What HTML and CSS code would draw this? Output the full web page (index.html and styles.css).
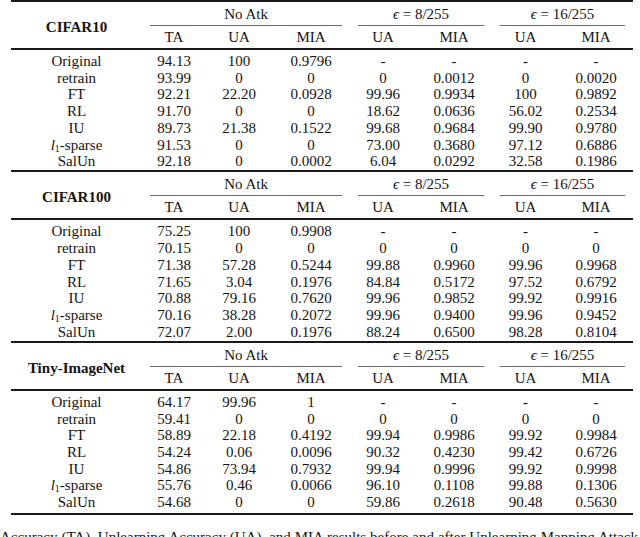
FILE: index.html
```html
<!DOCTYPE html>
<html lang="en">
<head>
<meta charset="utf-8">
<title>Unlearning results</title>
<link rel="stylesheet" href="styles.css">
</head>
<body>
<div class="page">
  <table class="res">
    <colgroup><col class="c-lab"><col class="c-ta"><col class="c-ua"><col class="c-mia"><col class="c-ua8"><col class="c-mia8"><col class="c-ua16"><col class="c-mia16"></colgroup>
    <thead>
      <tr class="h1"><th rowspan="2" class="ds">CIFAR10</th><th colspan="3" class="grp">No Atk</th><th colspan="2" class="grp"><i>ϵ</i> = 8/255</th><th colspan="2" class="grp"><i>ϵ</i> = 16/255</th></tr>
      <tr class="h2"><th>TA</th><th>UA</th><th>MIA</th><th>UA</th><th>MIA</th><th>UA</th><th>MIA</th></tr>
    </thead>
    <tbody>
      <tr><td>Original</td><td>94.13</td><td>100</td><td>0.9796</td><td>-</td><td>-</td><td>-</td><td>-</td></tr>
      <tr><td>retrain</td><td>93.99</td><td>0</td><td>0</td><td>0</td><td>0.0012</td><td>0</td><td>0.0020</td></tr>
      <tr><td>FT</td><td>92.21</td><td>22.20</td><td>0.0928</td><td>99.96</td><td>0.9934</td><td>100</td><td>0.9892</td></tr>
      <tr><td>RL</td><td>91.70</td><td>0</td><td>0</td><td>18.62</td><td>0.0636</td><td>56.02</td><td>0.2534</td></tr>
      <tr><td>IU</td><td>89.73</td><td>21.38</td><td>0.1522</td><td>99.68</td><td>0.9684</td><td>99.90</td><td>0.9780</td></tr>
      <tr><td><i>l</i><sub>1</sub>-sparse</td><td>91.53</td><td>0</td><td>0</td><td>73.00</td><td>0.3680</td><td>97.12</td><td>0.6886</td></tr>
      <tr><td>SalUn</td><td>92.18</td><td>0</td><td>0.0002</td><td>6.04</td><td>0.0292</td><td>32.58</td><td>0.1986</td></tr>
    </tbody>
  </table>
  <table class="res">
    <colgroup><col class="c-lab"><col class="c-ta"><col class="c-ua"><col class="c-mia"><col class="c-ua8"><col class="c-mia8"><col class="c-ua16"><col class="c-mia16"></colgroup>
    <thead>
      <tr class="h1"><th rowspan="2" class="ds">CIFAR100</th><th colspan="3" class="grp">No Atk</th><th colspan="2" class="grp"><i>ϵ</i> = 8/255</th><th colspan="2" class="grp"><i>ϵ</i> = 16/255</th></tr>
      <tr class="h2"><th>TA</th><th>UA</th><th>MIA</th><th>UA</th><th>MIA</th><th>UA</th><th>MIA</th></tr>
    </thead>
    <tbody>
      <tr><td>Original</td><td>75.25</td><td>100</td><td>0.9908</td><td>-</td><td>-</td><td>-</td><td>-</td></tr>
      <tr><td>retrain</td><td>70.15</td><td>0</td><td>0</td><td>0</td><td>0</td><td>0</td><td>0</td></tr>
      <tr><td>FT</td><td>71.38</td><td>57.28</td><td>0.5244</td><td>99.88</td><td>0.9960</td><td>99.96</td><td>0.9968</td></tr>
      <tr><td>RL</td><td>71.65</td><td>3.04</td><td>0.1976</td><td>84.84</td><td>0.5172</td><td>97.52</td><td>0.6792</td></tr>
      <tr><td>IU</td><td>70.88</td><td>79.16</td><td>0.7620</td><td>99.96</td><td>0.9852</td><td>99.92</td><td>0.9916</td></tr>
      <tr><td><i>l</i><sub>1</sub>-sparse</td><td>70.16</td><td>38.28</td><td>0.2072</td><td>99.96</td><td>0.9400</td><td>99.96</td><td>0.9452</td></tr>
      <tr><td>SalUn</td><td>72.07</td><td>2.00</td><td>0.1976</td><td>88.24</td><td>0.6500</td><td>98.28</td><td>0.8104</td></tr>
    </tbody>
  </table>
  <table class="res last">
    <colgroup><col class="c-lab"><col class="c-ta"><col class="c-ua"><col class="c-mia"><col class="c-ua8"><col class="c-mia8"><col class="c-ua16"><col class="c-mia16"></colgroup>
    <thead>
      <tr class="h1"><th rowspan="2" class="ds">Tiny-ImageNet</th><th colspan="3" class="grp">No Atk</th><th colspan="2" class="grp"><i>ϵ</i> = 8/255</th><th colspan="2" class="grp"><i>ϵ</i> = 16/255</th></tr>
      <tr class="h2"><th>TA</th><th>UA</th><th>MIA</th><th>UA</th><th>MIA</th><th>UA</th><th>MIA</th></tr>
    </thead>
    <tbody>
      <tr><td>Original</td><td>64.17</td><td>99.96</td><td>1</td><td>-</td><td>-</td><td>-</td><td>-</td></tr>
      <tr><td>retrain</td><td>59.41</td><td>0</td><td>0</td><td>0</td><td>0</td><td>0</td><td>0</td></tr>
      <tr><td>FT</td><td>58.89</td><td>22.18</td><td>0.4192</td><td>99.94</td><td>0.9986</td><td>99.92</td><td>0.9984</td></tr>
      <tr><td>RL</td><td>54.24</td><td>0.06</td><td>0.0096</td><td>90.32</td><td>0.4230</td><td>99.42</td><td>0.6726</td></tr>
      <tr><td>IU</td><td>54.86</td><td>73.94</td><td>0.7932</td><td>99.94</td><td>0.9996</td><td>99.92</td><td>0.9998</td></tr>
      <tr><td><i>l</i><sub>1</sub>-sparse</td><td>55.76</td><td>0.46</td><td>0.0066</td><td>96.10</td><td>0.1108</td><td>99.88</td><td>0.1306</td></tr>
      <tr><td>SalUn</td><td>54.68</td><td>0</td><td>0</td><td>59.86</td><td>0.2618</td><td>90.48</td><td>0.5630</td></tr>
    </tbody>
  </table>
  <p class="caption">Accuracy (TA), Unlearning Accuracy (UA), and MIA results before and after Unlearning Mapping Attack</p>
</div>
</body>
</html>
```
FILE: styles.css
```css
html, body {
  margin: 0;
  padding: 0;
  background: #ffffff;
}

.page {
  width: 622px;
  margin-left: 11px;
  font-family: "Liberation Serif", "Times New Roman", serif;
  color: #141414;
}

.res {
  width: 622px;
  table-layout: fixed;
  border-collapse: separate;
  border-spacing: 0;
  border-top: 2px solid #1a1a1a;
  font-size: 15px;
}

.res.last {
  border-bottom: 2px solid #1a1a1a;
}

.c-lab { width: 131px; }
.c-ta { width: 64px; }
.c-ua { width: 66px; }
.c-mia { width: 78px; }
.c-ua8 { width: 66px; }
.c-mia8 { width: 76px; }
.c-ua16 { width: 67px; }
.c-mia16 { width: 74px; }

.res th,
.res td {
  padding: 0;
  text-align: center;
  font-weight: normal;
  white-space: nowrap;
}

.h1 th {
  height: 24px;
  line-height: 24px;
}

.h1 .ds {
  font-weight: bold;
  border-bottom: 2px solid #1a1a1a;
  line-height: 18px;
  padding-top: 4px;
}

.grp {
  position: relative;
}

.grp::after {
  content: "";
  position: absolute;
  left: 8px;
  right: 8px;
  bottom: 0;
  height: 1px;
  background: #6a6a6a;
}

.h2 th {
  height: 22px;
  line-height: 22px;
  border-bottom: 2px solid #1a1a1a;
}

.res td {
  height: 16.7px;
  line-height: 16.7px;
}

.res tbody tr:first-child td {
  padding-top: 3px;
}

.res tbody tr:last-child td {
  padding-bottom: 0.5px;
}

.res.last tbody tr:last-child td {
  padding-bottom: 2px;
}

.res i {
  font-style: italic;
}

.res sub {
  font-size: 10px;
  line-height: 0;
  vertical-align: -2px;
}

.caption {
  margin: 12px 0 0 -11px;
  width: 638px;
  font-size: 15px;
  line-height: 20px;
  text-align: justify;
  text-align-last: justify;
  color: #141414;
}
```
